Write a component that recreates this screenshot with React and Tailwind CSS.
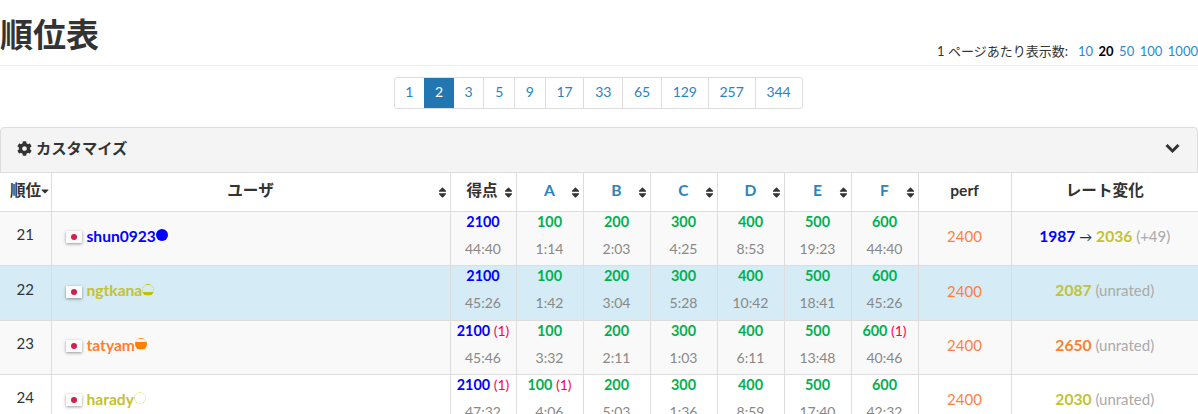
import { FaCog, FaChevronDown, FaSort, FaCaretDown } from 'react-icons/fa';

const pages = ['1', '2', '3', '5', '9', '17', '33', '65', '129', '257', '344'];
const perPage = ['10', '20', '50', '100', '1000'];
const tasks = ['A', 'B', 'C', 'D', 'E', 'F'];

const BLUE = 'text-[#0000ff]';
const YELLOW = 'text-[#c2c232]';
const ORANGE = 'text-[#ff7f2f]';

const rows = [
    {
        rank: 21, name: 'shun0923', color: BLUE, circle: 'border-[#0000ff] bg-[#0000ff]',
        total: ['2100', '', '44:40'],
        scores: [['100', '', '1:14'], ['200', '', '2:03'], ['300', '', '4:25'], ['400', '', '8:53'], ['500', '', '19:23'], ['600', '', '44:40']],
        change: <><b className={`${BLUE} text-[15.6px]`}>1987</b> <span className="text-[#333] text-[13px]">→</span> <b className={`${YELLOW} text-[15.6px]`}>2036</b> <span className="text-[#aaa]">(+49)</span></>,
        bg: 'bg-[#f9f9f9]', h: 'h-[54px]',
    },
    {
        rank: 22, name: 'ngtkana', color: YELLOW, circle: 'border-[#c0c000b0] bg-[linear-gradient(transparent_70%,#c0c000_70%)]',
        total: ['2100', '', '45:26'],
        scores: [['100', '', '1:42'], ['200', '', '3:04'], ['300', '', '5:28'], ['400', '', '10:42'], ['500', '', '18:41'], ['600', '', '45:26']],
        change: <><b className={`${YELLOW} text-[15.6px]`}>2087</b> <span className="text-[#aaa]">(unrated)</span></>,
        bg: 'bg-[#d5ebf5]', h: 'h-[55px]',
    },
    {
        rank: 23, name: 'tatyam', color: ORANGE, circle: 'border-[#ff8000b0] bg-[linear-gradient(transparent_35%,#ff8000_35%)]',
        total: ['2100', '(1)', '45:46'],
        scores: [['100', '', '3:32'], ['200', '', '2:11'], ['300', '', '1:03'], ['400', '', '6:11'], ['500', '', '13:48'], ['600', '(1)', '40:46']],
        change: <><b className={`${ORANGE} text-[15.6px]`}>2650</b> <span className="text-[#aaa]">(unrated)</span></>,
        bg: 'bg-[#f9f9f9]', h: 'h-[54px]',
    },
    {
        rank: 24, name: 'harady', color: YELLOW, circle: 'border-dashed border-[#c0c00090]',
        total: ['2100', '(1)', '47:32'],
        scores: [['100', '(1)', '4:06'], ['200', '', '5:03'], ['300', '', '1:36'], ['400', '', '8:59'], ['500', '', '17:40'], ['600', '', '42:32']],
        change: <><b className={`${YELLOW} text-[15.6px]`}>2030</b> <span className="text-[#aaa]">(unrated)</span></>,
        bg: 'bg-white', h: 'h-[54px]',
    },
];

function SortIcon() {
    return <FaSort className="absolute right-[3px] top-[13px] w-[9px] h-[13px] text-[#333]" />;
}

function ScoreCell({ value, color }) {
    const [score, penalty, time] = value;
    return (
        <td className="border border-[#ddd] p-0 align-top text-center text-[14px]">
            <div className="h-[24px] leading-[20px]">
                <b className={`${color} text-[14.4px]`}>{score}</b>
                {penalty && <span className="text-[#ff0050]"> {penalty}</span>}
            </div>
            <div className="leading-[26px] text-[#888]">{time}</div>
        </td>
    );
}

export default function App() {
    return (
        <div className="w-[1198px] h-[414px] overflow-hidden bg-white text-[15px] text-[#333] font-['Lato','Noto_Sans_CJK_JP',sans-serif]">
            {/* Header */}
            <div className="flex justify-between items-end h-[66px] border-b border-[#eee]">
                <h2 className="text-[33px] font-bold leading-[46px] mb-[8px]">順位表</h2>
                <div className="text-[13px] leading-[18px] mb-[5px] whitespace-nowrap">
                    <span className="mr-[10px]">1 ページあたり表示数:</span>
                    {perPage.map((n) => (
                        <span key={n} className={n === '20' ? 'font-bold text-black mr-[5.5px]' : 'text-[#2b8acb] mr-[5.5px] last:mr-0'}>{n}</span>
                    ))}
                </div>
            </div>

            {/* Pagination */}
            <div className="flex justify-center mt-[11px] mb-[18px] pr-[2px]">
                <div className="flex h-[32px] border border-[#ddd] rounded-[3px] text-[14px] leading-[27px]">
                    {pages.map((p, i) => (
                        <span
                            key={p}
                            className={p === '2'
                                ? 'px-[10.75px] bg-[#2277b2] text-white'
                                : `px-[10.75px] text-[#2b83bf] ${i < pages.length - 1 && pages[i + 1] !== '2' ? 'border-r border-[#ddd]' : ''}`}
                        >
                            {p}
                        </span>
                    ))}
                </div>
            </div>

            {/* Customize panel */}
            <div className="flex justify-between items-center h-[46px] pl-[16px] pr-[17px] pb-[4px] bg-[#f4f4f4] border border-[#ddd] rounded-t-[4px]">
                <div className="flex items-center gap-[4px] font-bold text-[15.3px]">
                    <FaCog className="w-[15px] h-[15px]" />
                    <span>カスタマイズ</span>
                </div>
                <FaChevronDown className="w-[15px] h-[15px] text-[#333] stroke-[30px]" />
            </div>

            {/* Standings */}
            <table className="w-[1198px] table-fixed border-collapse -mt-[1px]">
                <colgroup>
                    <col className="w-[51px]" />
                    <col className="w-[399px]" />
                    <col className="w-[66px]" />
                    <col className="w-[67px]" />
                    <col className="w-[67px]" />
                    <col className="w-[67px]" />
                    <col className="w-[67px]" />
                    <col className="w-[67px]" />
                    <col className="w-[67px]" />
                    <col className="w-[93px]" />
                    <col className="w-[187px]" />
                </colgroup>
                <thead>
                    <tr className="h-[39px] font-bold text-[15.6px]">
                        <th className="relative border border-[#ddd] border-l-0 p-0 pb-[3px] text-left pl-[10px]">
                            順位<FaCaretDown className="absolute left-[40px] top-[12px] w-[10px] h-[12px]" />
                        </th>
                        <th className="relative border border-[#ddd] p-0 pb-[3px]">ユーザ<SortIcon /></th>
                        <th className="relative border border-[#ddd] p-0 pb-[3px] pr-[2px]">得点<SortIcon /></th>
                        {tasks.map((t) => (
                            <th key={t} className="relative border border-[#ddd] p-0 pb-[3px] text-[#2b83bf]">{t}<SortIcon /></th>
                        ))}
                        <th className="border border-[#ddd] p-0 pb-[3px]">perf</th>
                        <th className="border border-[#ddd] border-r-0 p-0 pb-[3px]">レート変化</th>
                    </tr>
                </thead>
                <tbody>
                    {rows.map((row) => (
                        <tr key={row.rank} className={`${row.bg} ${row.h}`}>
                            <td className="border border-[#ddd] border-l-0 p-0 text-center pb-[8px]">{row.rank}</td>
                            <td className="border border-[#ddd] p-0 pl-[14px] pb-[4px]">
                                <div className="flex items-center font-bold text-[15.6px]">
                                    <span className="flex items-center justify-center w-[16px] h-[12px] mr-[5px] mt-[2px] bg-[#fafafa] shadow-[0_1px_3px_rgba(0,0,0,0.4)]">
                                        <span className="w-[6px] h-[6px] rounded-full bg-[#d0204c]" />
                                    </span>
                                    <span className={row.color}>{row.name}</span>
                                    <span className={`w-[12px] h-[12px] rounded-full border border-dotted mb-[2px] ${row.circle}`} />
                                </div>
                            </td>
                            <ScoreCell value={row.total} color={BLUE} />
                            {row.scores.map((s, i) => (
                                <ScoreCell key={i} value={s} color="text-[#00b050]" />
                            ))}
                            <td className="border border-[#ddd] p-0 pb-[4px] text-center text-[#ff7f40]">2400</td>
                            <td className="border border-[#ddd] border-r-0 p-0 pb-[4px] text-center">{row.change}</td>
                        </tr>
                    ))}
                </tbody>
            </table>
        </div>
    );
}
